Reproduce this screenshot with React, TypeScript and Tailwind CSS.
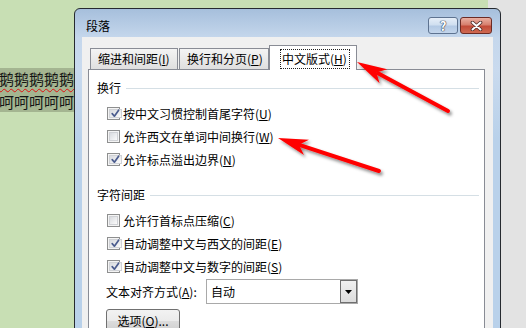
import React from "react";

const Mn = ({ c }: { c: string }) => (
  <span className="underline decoration-1 underline-offset-[1px]">{c}</span>
);

function Checkbox({ checked }: { checked?: boolean }) {
  return (
    <span className="flex h-[13px] w-[13px] shrink-0 border border-[#8e8f8f] bg-[#f4f4f4] p-px">
      <span className="flex flex-1 items-center justify-center border border-[#d0d2d6] bg-linear-to-br from-[#d9dbdf] to-[#fbfbfb]">
        {checked && (
          <svg width="11" height="11" viewBox="0 0 11 11" className="block">
            <path d="M2.2 5.6 L4.4 8.2 L8.6 2.2" fill="none" stroke="#4b5c8e" strokeWidth="1.7" strokeLinecap="round" strokeLinejoin="round" />
          </svg>
        )}
      </span>
    </span>
  );
}

function Row({ checked, children }: { checked?: boolean; children: React.ReactNode }) {
  return (
    <div className="flex h-[23px] items-center pl-[10px]">
      <Checkbox checked={checked} />
      <span className="ml-[3px] whitespace-nowrap">{children}</span>
    </div>
  );
}

function Header({ title, mt }: { title: string; mt: string }) {
  return (
    <div className={`flex h-[16px] items-center ${mt}`}>
      <span className="whitespace-nowrap">{title}</span>
      <div className="ml-[5px] mr-[5px] h-px flex-1 bg-[#d5dfe5]" />
    </div>
  );
}

export default function App() {
  return (
    <div className="relative h-[328px] w-[526px] overflow-hidden font-['Noto_Sans_CJK_SC','Noto_Sans',sans-serif] text-[12px] leading-[16px] text-black">
      {/* desktop / document background */}
      <div className="flex h-full w-full">
        <div className="w-[488px] bg-[#c8dfb4]">
          <div className="mt-[68px] w-[74px] overflow-hidden bg-[#a4b591] text-[15px] leading-[22px] text-[#151515]">
            <div className="-ml-px h-[22px] whitespace-nowrap">
              <span className="underline decoration-wavy decoration-[#e01010] decoration-1 underline-offset-[3px]">鹅鹅鹅鹅鹅</span>
            </div>
            <div className="-ml-px h-[22px] whitespace-nowrap pt-px">呵呵呵呵呵</div>
          </div>
        </div>
        <div className="flex-1 bg-[#e3e3e3]" />
      </div>

      {/* dialog window */}
      <div className="absolute left-[74px] top-[8px] flex h-[340px] w-[427px] flex-col rounded-t-[6px] border border-[#262a30] bg-[linear-gradient(180deg,#a6bfdc_0px,#c5d7ec_29px,#c9daee_60px,#b9d1ea_130px,#b9d1ea_100%)]">
        {/* title bar */}
        <div className="flex h-[28px] items-start">
          <div className="pl-[11px] pt-[9px]">段落</div>
          <div className="ml-auto mr-[8px] flex gap-[2px] pt-[8px]">
            <div className="flex h-[17px] w-[30px] items-center justify-center rounded-[3px] border border-[#5e7390] bg-[linear-gradient(180deg,#e6eef8_0%,#d0dff0_45%,#b3c9e4_55%,#c4d6ec_100%)]">
              <span className="text-[13px] font-bold leading-[13px] text-white [text-shadow:0_0_1px_#2c3a52,0_0_1px_#2c3a52,0_0_1px_#2c3a52]">?</span>
            </div>
            <div className="flex h-[17px] w-[32px] items-center justify-center rounded-[3px] border border-[#6b2b24] bg-[linear-gradient(180deg,#eab0a2_0%,#d7806e_45%,#c24b38_55%,#cf6a52_100%)]">
              <svg width="13" height="10" viewBox="0 0 13 10" className="block">
                <path d="M2.5 1.5 L10.5 8.5 M10.5 1.5 L2.5 8.5" stroke="#4a2a26" strokeWidth="3.6" strokeLinecap="round" />
                <path d="M2.5 1.5 L10.5 8.5 M10.5 1.5 L2.5 8.5" stroke="#ffffff" strokeWidth="2" strokeLinecap="round" />
              </svg>
            </div>
          </div>
        </div>

        {/* client area */}
        <div className="mx-[7px] flex flex-1 flex-col bg-[#f0f0f0] pl-[6px] pr-[8px] pt-[8px]">
          {/* tabs */}
          <div className="relative z-10 flex h-[24px] items-end pl-[2px]">
            <div className="flex h-[21px] w-[88px] items-center border border-b-0 border-[#898c95] bg-linear-to-b from-[#f4f4f4] to-[#dfdfdf] pl-[7px] whitespace-nowrap">
              缩进和间距(<Mn c="I" />)
            </div>
            <div className="ml-px flex h-[21px] w-[90px] items-center border border-b-0 border-[#898c95] bg-linear-to-b from-[#f4f4f4] to-[#dfdfdf] pl-[7px] whitespace-nowrap">
              换行和分页(<Mn c="P" />)
            </div>
            <div className="-mb-px flex h-[25px] w-[88px] items-start border border-b-0 border-[#898c95] bg-white pl-[10px] pt-[3px]">
              <span className="flex h-[20px] w-[70px] items-center border border-dotted border-[#222] pl-px whitespace-nowrap">
                中文版式(<Mn c="H" />)
              </span>
            </div>
          </div>

          {/* panel */}
          <div className="flex flex-1 flex-col border border-[#898c95] bg-white pl-[8px] pt-[10px]">
            <Header title="换行" mt="" />
            <div className="mt-[6px] flex flex-col">
              <Row checked>
                按中文习惯控制首尾字符(<Mn c="U" />)
              </Row>
              <Row>
                允许西文在单词中间换行(<Mn c="W" />)
              </Row>
              <Row checked>
                允许标点溢出边界(<Mn c="N" />)
              </Row>
            </div>

            <Header title="字符间距" mt="mt-[16px]" />
            <div className="mt-[6px] flex flex-col">
              <Row>
                允许行首标点压缩(<Mn c="C" />)
              </Row>
              <Row checked>
                自动调整中文与西文的间距(<Mn c="E" />)
              </Row>
              <Row checked>
                自动调整中文与数字的间距(<Mn c="S" />)
              </Row>
            </div>

            <div className="mt-[1px] flex h-[25px] items-center pl-[9px]">
              <span className="w-[100px] whitespace-nowrap">
                文本对齐方式(<Mn c="A" />):
              </span>
              <div className="flex h-[25px] w-[152px] items-stretch border border-[#a9a9a9] bg-white">
                <span className="flex flex-1 items-center pl-[4px]">自动</span>
                <span className="flex w-[17px] items-center justify-center border border-[#6f6f6f] bg-linear-to-b from-[#f0f0f0] to-[#dcdcdc]">
                  <svg width="7" height="4" viewBox="0 0 7 4" className="block">
                    <path d="M0 0 H7 L3.5 4 Z" fill="#000" />
                  </svg>
                </span>
              </div>
            </div>

            <div className="mt-[5px] pl-[9px]">
              <div className="flex h-[23px] w-[74px] items-center justify-center rounded-[3px] border border-[#707070] bg-[linear-gradient(180deg,#f2f2f2_0%,#ebebeb_50%,#dddddd_51%,#cfcfcf_100%)] whitespace-nowrap">
                选项(<Mn c="O" />)...
              </div>
            </div>
          </div>
        </div>
      </div>

      {/* red annotation arrows */}
      <svg className="pointer-events-none absolute inset-0" width="526" height="328" viewBox="0 0 526 328">
        <defs>
          <filter id="sh" x="-20%" y="-20%" width="140%" height="140%">
            <feDropShadow dx="2" dy="2.5" stdDeviation="1.6" floodColor="#000" floodOpacity="0.45" />
          </filter>
        </defs>
        <g filter="url(#sh)">
          <line x1="448" y1="111" x2="378" y2="73.3" stroke="#ff0000" strokeWidth="4" strokeLinecap="round" />
          <polygon points="357,62 387.2,69.2 376.4,72.4 379.6,83.2" fill="#ff0000" />
          <line x1="379" y1="171" x2="300" y2="145.2" stroke="#ff0000" strokeWidth="4" strokeLinecap="round" />
          <polygon points="278,138 309,139.7 298.9,144.8 304,154.9" fill="#ff0000" />
        </g>
      </svg>
    </div>
  );
}
